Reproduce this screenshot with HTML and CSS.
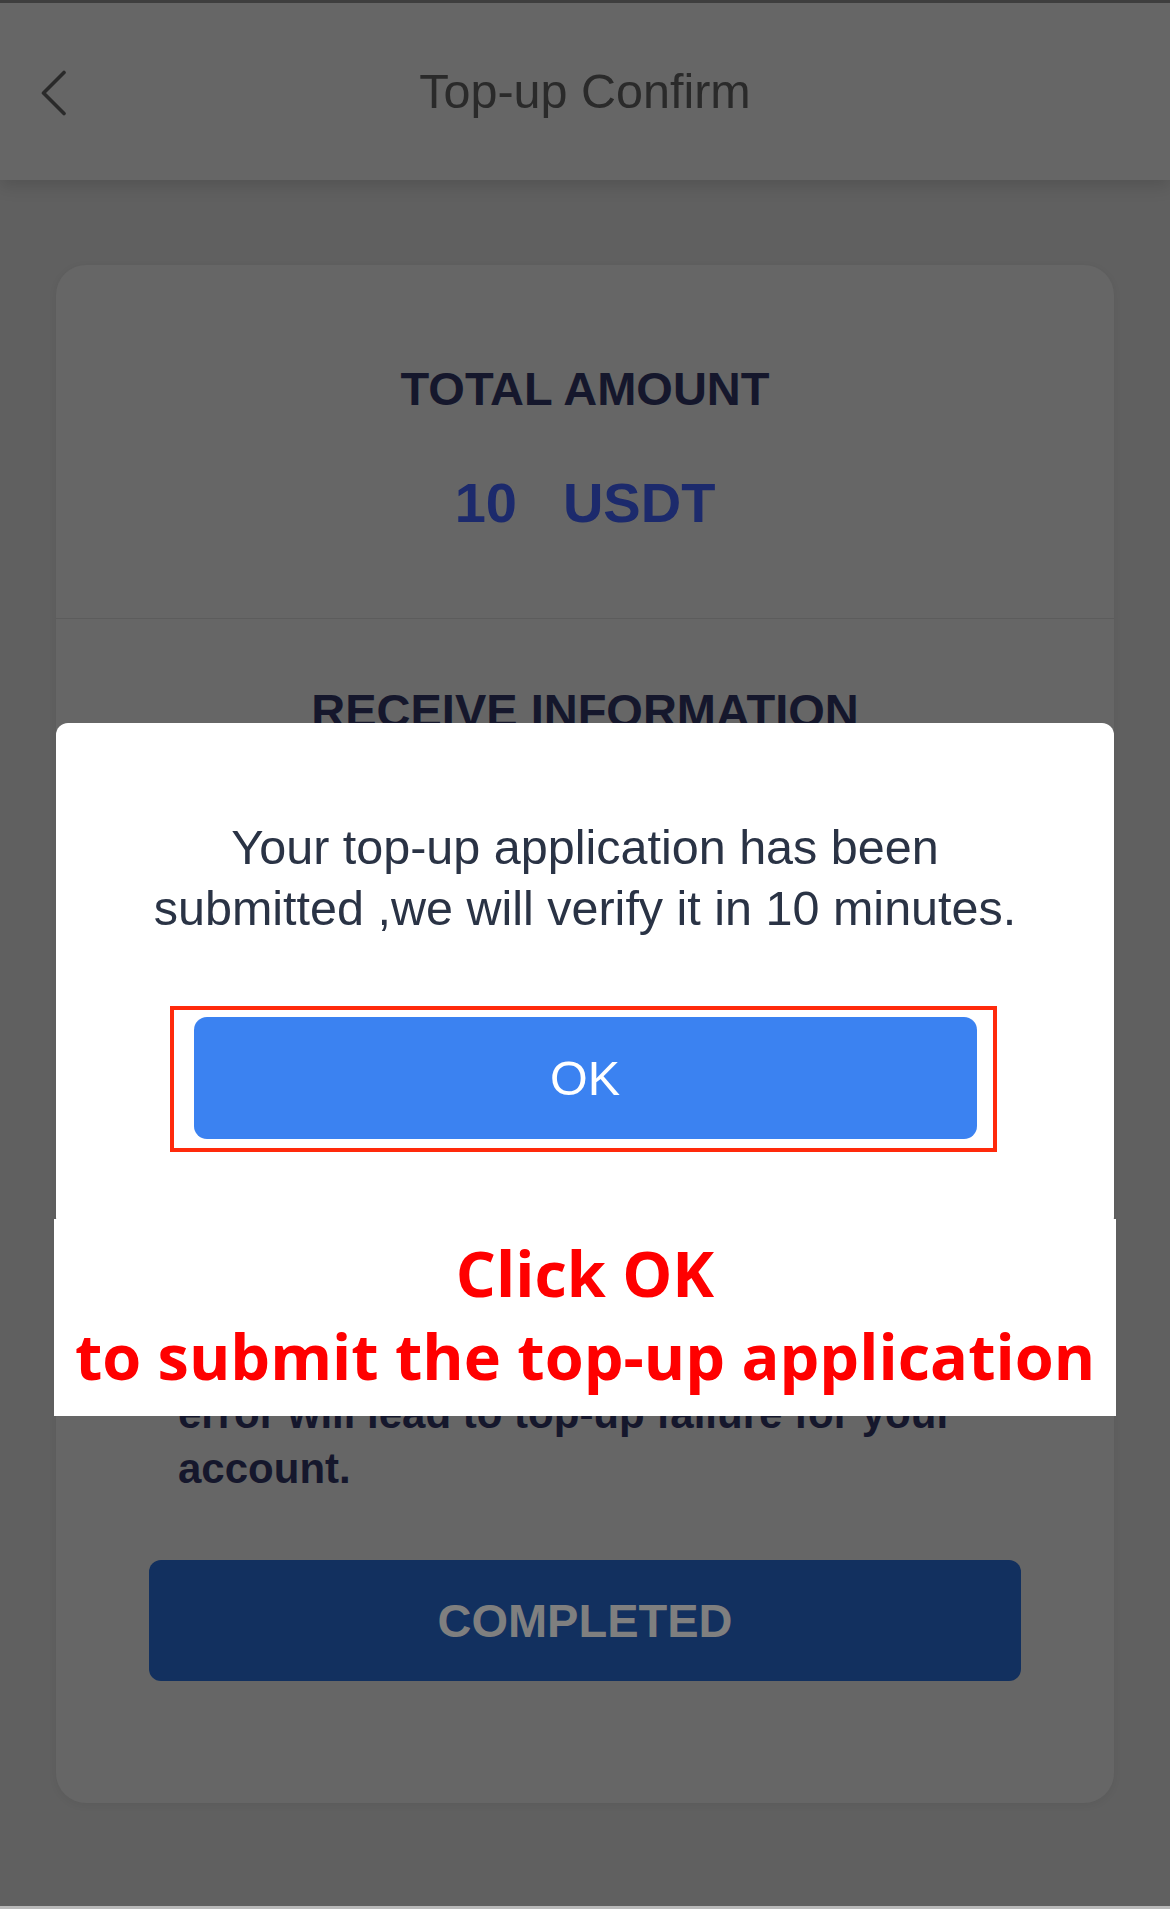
FILE: index.html
```html
<!DOCTYPE html>
<html lang="en">
<head>
<meta charset="utf-8">
<title>Top-up Confirm</title>
<link rel="stylesheet" href="styles.css">
</head>
<body>
<div class="screen">
  <header class="nav">
    <button class="back" aria-label="Back">
      <svg width="28" height="46" viewBox="0 0 28 46"><path d="M24 2.5 L3.5 23 L24 43.5" fill="none" stroke="#2a2a2a" stroke-width="3.6" stroke-linecap="round" stroke-linejoin="round"/></svg>
    </button>
    <h1 class="nav-title">Top-up Confirm</h1>
    <span class="nav-spacer"></span>
  </header>

  <main class="card">
    <section class="amount">
      <div class="label">TOTAL AMOUNT</div>
      <div class="value"><span>10</span><span>USDT</span></div>
    </section>
    <section class="receive">
      <div class="label">RECEIVE INFORMATION</div>
      <div class="qr" aria-hidden="true">
        <svg width="410" height="410" viewBox="0 0 41 41">
          <rect x="0" y="0" width="41" height="41" fill="#666"/>
          <path d="M2 2h9v9h-9z M4 4v5h5v-5z M30 2h9v9h-9z M32 4v5h5v-5z M2 30h9v9h-9z M4 32v5h5v-5z" fill="#15172c" fill-rule="evenodd"/>
          <path d="M5 5h3v3h-3z M33 5h3v3h-3z M5 33h3v3h-3z M14 3h2v2h-2z M18 5h3v2h-3z M14 9h4v2h-4z M22 10h3v3h-3z M14 14h5v2h-5z M24 16h4v3h-4z M30 15h2v6h-2z M34 18h4v2h-4z M3 15h3v3h-3z M8 19h4v2h-4z M16 20h3v4h-3z M21 22h5v2h-5z M29 25h3v3h-3z M35 24h3v4h-3z M14 28h3v3h-3z M19 30h4v2h-4z M25 31h2v6h-2z M30 33h5v2h-5z M16 35h3v3h-3z M35 36h3v2h-3z" fill="#15172c"/>
        </svg>
      </div>
      <p class="note">Please transfer the exact amount to the receiving address above. Any transfer error will lead to top-up failure for your account.</p>
      <button class="completed">COMPLETED</button>
    </section>
  </main>

  <div class="modal">
    <p class="modal-text">Your top-up application has been submitted ,we will verify it in 10 minutes.</p>
    <div class="ok-wrap">
      <button class="ok">OK</button>
      <span class="frame"></span>
    </div>
  </div>

  <div class="callout">
    <div>Click OK</div>
    <div>to submit the top-up application</div>
  </div>
</div>
</body>
</html>
```

FILE: styles.css
```css
* { box-sizing: border-box; }

html, body {
  margin: 0;
  padding: 0;
  background: #606060;
}

.screen {
  position: relative;
  width: 1170px;
  height: 1909px;
  overflow: hidden;
  background: #606060;
  border-bottom: 3px solid #b9b9b9;
  font-family: "Liberation Sans", Arial, sans-serif;
}

/* Header */
.nav {
  position: relative;
  z-index: 1;
  height: 180px;
  border-top: 3px solid #3e3e3e;
  background: #666666;
  display: grid;
  grid-template-columns: 1fr auto 1fr;
  align-items: center;
  box-shadow: 0 6px 16px rgba(0, 0, 0, 0.14);
}

.back {
  justify-self: start;
  margin-left: 40px;
  margin-top: 2px;
  padding: 0;
  border: 0;
  background: none;
  display: flex;
}

.nav-title {
  margin: 0;
  font-size: 48.5px;
  line-height: 1;
  font-weight: normal;
  color: #2a2a2a;
}

/* Card */
.card {
  margin: 85px 56px 0;
  background: #666666;
  border-radius: 30px;
  box-shadow: 0 2px 8px rgba(0, 0, 0, 0.06);
}

.label {
  font-size: 47px;
  line-height: 56px;
  font-weight: bold;
  color: #15172c;
  text-align: center;
}

.amount {
  padding: 96px 0 82px;
  border-bottom: 1px solid #5c5c5c;
}

.value {
  margin-top: 53px;
  display: flex;
  justify-content: center;
  gap: 46px;
  font-size: 56px;
  line-height: 66px;
  font-weight: bold;
  color: #1c2a6c;
}

.receive {
  padding: 64px 93px 122px;
}

.qr {
  width: 410px;
  height: 410px;
  margin: 50px auto 0;
}

.qr svg {
  display: block;
}

.note {
  margin: 77px 0 0 29px;
  font-size: 42px;
  line-height: 55px;
  font-weight: bold;
  color: #15172c;
}

.completed {
  display: block;
  width: 100%;
  height: 121px;
  margin-top: 64px;
  border: 0;
  border-radius: 12px;
  background: #12305f;
  color: #7f7f7f;
  font-family: "Liberation Sans", Arial, sans-serif;
  font-size: 47px;
  font-weight: bold;
}

/* Modal */
.modal {
  position: absolute;
  top: 723px;
  left: 56px;
  width: 1058px;
  padding: 94px 90px 90px;
  background: #ffffff;
  border-radius: 12px;
  text-align: center;
}

.modal-text {
  margin: 0;
  font-size: 48.5px;
  line-height: 61px;
  color: #2a3345;
}

.ok-wrap {
  position: relative;
  width: 783px;
  margin: 78px auto 0;
}

.ok {
  display: block;
  width: 100%;
  height: 122px;
  border: 0;
  border-radius: 13px;
  background: #3b82f1;
  color: #ffffff;
  font-family: "Liberation Sans", Arial, sans-serif;
  font-size: 48.5px;
}

.frame {
  position: absolute;
  top: -11px;
  bottom: -13px;
  left: -24px;
  right: -20px;
  border: 4px solid #ff2a0c;
  pointer-events: none;
}

/* Annotation */
.callout {
  position: absolute;
  top: 1219px;
  left: 54px;
  width: 1062px;
  height: 197px;
  padding-top: 12px;
  background: #ffffff;
  text-align: center;
  white-space: nowrap;
  font-family: "Open Sans", "Noto Sans", sans-serif;
  font-weight: 700;
  font-size: 63px;
  line-height: 83px;
  color: #ff0000;
}
```
